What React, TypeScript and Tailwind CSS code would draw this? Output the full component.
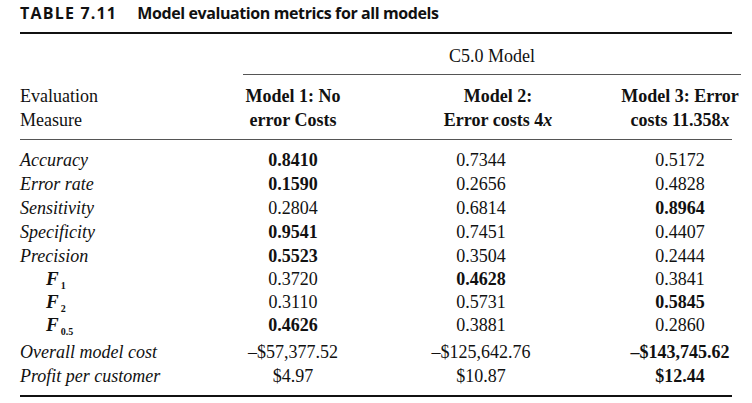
const serif = "font-['Liberation_Serif','Times_New_Roman',serif]";

type Cell = { v: string; b?: boolean };
type Row = { label: React.ReactNode; cells: Cell[]; h: string };

const F = ({ sub }: { sub: string }) => (
  <span className="pl-[26px] font-bold italic text-[19px]">
    F<sub className="text-[10px] not-italic font-bold relative top-[4px] ml-[2px]">{sub}</sub>
  </span>
);

const rows: Row[] = [
  { label: <i>Accuracy</i>, cells: [{ v: "0.8410", b: true }, { v: "0.7344" }, { v: "0.5172" }], h: "h-[24px]" },
  { label: <i>Error rate</i>, cells: [{ v: "0.1590", b: true }, { v: "0.2656" }, { v: "0.4828" }], h: "h-[24px]" },
  { label: <i>Sensitivity</i>, cells: [{ v: "0.2804" }, { v: "0.6814" }, { v: "0.8964", b: true }], h: "h-[24px]" },
  { label: <i>Specificity</i>, cells: [{ v: "0.9541", b: true }, { v: "0.7451" }, { v: "0.4407" }], h: "h-[24px]" },
  { label: <i>Precision</i>, cells: [{ v: "0.5523", b: true }, { v: "0.3504" }, { v: "0.2444" }], h: "h-[23px]" },
  { label: <F sub="1" />, cells: [{ v: "0.3720" }, { v: "0.4628", b: true }, { v: "0.3841" }], h: "h-[23px]" },
  { label: <F sub="2" />, cells: [{ v: "0.3110" }, { v: "0.5731" }, { v: "0.5845", b: true }], h: "h-[23px]" },
  { label: <F sub="0.5" />, cells: [{ v: "0.4626", b: true }, { v: "0.3881" }, { v: "0.2860" }], h: "h-[27px]" },
  { label: <i>Overall model cost</i>, cells: [{ v: "\u2013$57,377.52" }, { v: "\u2013$125,642.76" }, { v: "\u2013$143,745.62", b: true }], h: "h-[24px]" },
  { label: <i>Profit per customer</i>, cells: [{ v: "$4.97" }, { v: "$10.87" }, { v: "$12.44", b: true }], h: "h-[24px]" },
];

const cols = "grid grid-cols-[223px_100px_276px_122px]";

export default function App() {
  return (
    <div className={`w-[752px] h-[403px] bg-white px-[20px] text-[#111] ${serif} text-[18px] leading-[24px]`}>
      <div className="h-[32px] pt-[2px] font-['Open_Sans',sans-serif] font-bold text-[16px] leading-[22px] whitespace-nowrap">
        <span className="tracking-[1.2px]">TABLE 7.11</span>
        <span className="ml-[20px] tracking-[-0.4px]">Model evaluation metrics for all models</span>
      </div>
      <div className="border-t-2 border-[#111]">
        <div className={cols}>
          <div />
          <div className="col-span-3 h-[41px] pt-[10px] text-center border-b border-[#555]">C5.0 Model</div>
        </div>
        <div className={`${cols} pt-[9px] pb-[7px] border-b border-[#555]`}>
          <div>
            <div>Evaluation</div>
            <div>Measure</div>
          </div>
          <div className="text-center font-bold whitespace-nowrap">
            <div>Model 1: No</div>
            <div>error Costs</div>
          </div>
          <div className="text-center font-bold pl-[34px]">
            <div>Model 2:</div>
            <div>
              Error costs 4<i>x</i>
            </div>
          </div>
          <div className="text-center font-bold whitespace-nowrap">
            <div>Model 3: Error</div>
            <div>
              costs 11.358<i>x</i>
            </div>
          </div>
        </div>
        <div className="pt-[8px] pb-[7px] border-b-2 border-[#111]">
          {rows.map((r, i) => (
            <div key={i} className={`${cols} ${r.h}`}>
              <div className="whitespace-nowrap">{r.label}</div>
              {r.cells.map((c, j) => (
                <div key={j} className={`text-center whitespace-nowrap ${c.b ? "font-bold" : ""}`}>
                  {c.v}
                </div>
              ))}
            </div>
          ))}
        </div>
      </div>
    </div>
  );
}
